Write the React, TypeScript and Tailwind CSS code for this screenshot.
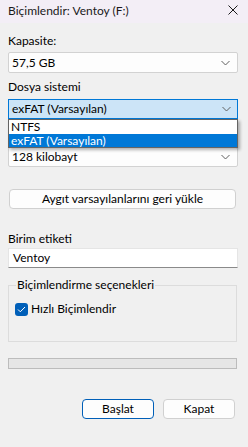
import React from "react";

const font = { fontFamily: 'Lato, "Noto Sans", sans-serif' };

function Chevron() {
  return (
    <svg width="9" height="5" viewBox="0 0 9 5" className="absolute right-[7px] top-1/2 -translate-y-1/2">
      <path d="M0.5 0.5 L4.5 4.5 L8.5 0.5" fill="none" stroke="#606060" strokeWidth="1" />
    </svg>
  );
}

export default function App() {
  return (
    <div
      className="w-[248px] h-[447px] bg-[#f0f0f0] flex flex-col text-[12px] leading-[16px] text-black overflow-hidden"
      style={font}
    >
      {/* title bar */}
      <div className="h-[23px] bg-[#f3eef6] flex items-center justify-between pl-[8px] pr-[10px] shrink-0">
        <span className="text-[12px] text-[#1a1a1a] mb-[2px]">Biçimlendir: Ventoy (F:)</span>
        <svg width="10" height="10" viewBox="0 0 10 10" className="mb-[4px]">
          <path d="M0.5 0.5 L9.5 9.5 M9.5 0.5 L0.5 9.5" stroke="#1a1a1a" strokeWidth="1" />
        </svg>
      </div>

      <div className="flex flex-col pl-[8px] pr-[10px]">
        <div className="mt-[10px] h-[16px]">Kapasite:</div>
        <div className="mt-[3px] h-[21px] relative bg-[#fdfdfd] border border-[#d2d2d2] rounded-[2px] flex items-center pl-[3px]">
          57,5 GB
          <Chevron />
        </div>

        <div className="mt-[6px] h-[16px]">Dosya sistemi</div>
        <div className="mt-[4px] h-[20px] relative">
          <div className="h-full bg-[#cce4f7] border border-[#0078d7] flex items-center pl-[3px]">
            exFAT (Varsayılan)
            <Chevron />
          </div>
          <div className="absolute left-0 right-0 top-[20px] z-10 bg-white border border-[#646464] shadow-[2px_2px_3px_rgba(0,0,0,0.3)] flex flex-col">
            <div className="h-[14px] leading-[14px] pl-[2px] text-black">NTFS</div>
            <div className="h-[13px] leading-[13px] pl-[2px] bg-[#0078d7] text-white">exFAT (Varsayılan)</div>
          </div>
        </div>

        <div className="mt-[28px] h-[20px] relative bg-[#fdfdfd] border border-[#d2d2d2] rounded-[2px] flex items-center pl-[3px]">
          128 kilobayt
          <Chevron />
        </div>

        <button className="mt-[22px] ml-[1px] mr-[2px] h-[20px] bg-[#fdfdfd] border border-[#d0d0d0] rounded-[4px] flex items-center justify-center text-[12px]">
          Aygıt varsayılanlarını geri yükle
        </button>

        <div className="mt-[22px] h-[16px]">Birim etiketi</div>
        <div className="mt-[1px] h-[20px] bg-white border border-[#e5e5e5] border-b-[#8a8a8a] flex items-center pl-[4px]">
          Ventoy
        </div>

        <div className="mt-[17px] mr-[1px] h-[57px] border border-[#dcdcdc] relative">
          <span className="absolute left-[7px] top-[-9px] bg-[#f0f0f0] px-[1px]">Biçimlendirme seçenekleri</span>
          <div className="flex items-center mt-[15px] ml-[6px]">
            <div className="w-[13px] h-[13px] rounded-[3px] bg-[#005fb8] flex items-center justify-center">
              <svg width="9" height="7" viewBox="0 0 9 7">
                <path d="M1 3.5 L3.3 5.8 L8 1" fill="none" stroke="white" strokeWidth="1" />
              </svg>
            </div>
            <span className="ml-[3px]">Hızlı Biçimlendir</span>
          </div>
        </div>

        <div className="mt-[16px] mr-[1px] h-[11px] bg-[#e6e6e6] border border-[#bcbcbc]" />

        <div className="mt-[30px] flex justify-end gap-[9px] mr-[3px]">
          <button className="w-[72px] h-[20px] bg-[#fdfdfd] border border-[#005fb8] rounded-[4px] flex items-center justify-center text-[12px]">
            Başlat
          </button>
          <button className="w-[72px] h-[20px] bg-[#fdfdfd] border border-[#d0d0d0] rounded-[4px] flex items-center justify-center text-[12px]">
            Kapat
          </button>
        </div>
      </div>
    </div>
  );
}
